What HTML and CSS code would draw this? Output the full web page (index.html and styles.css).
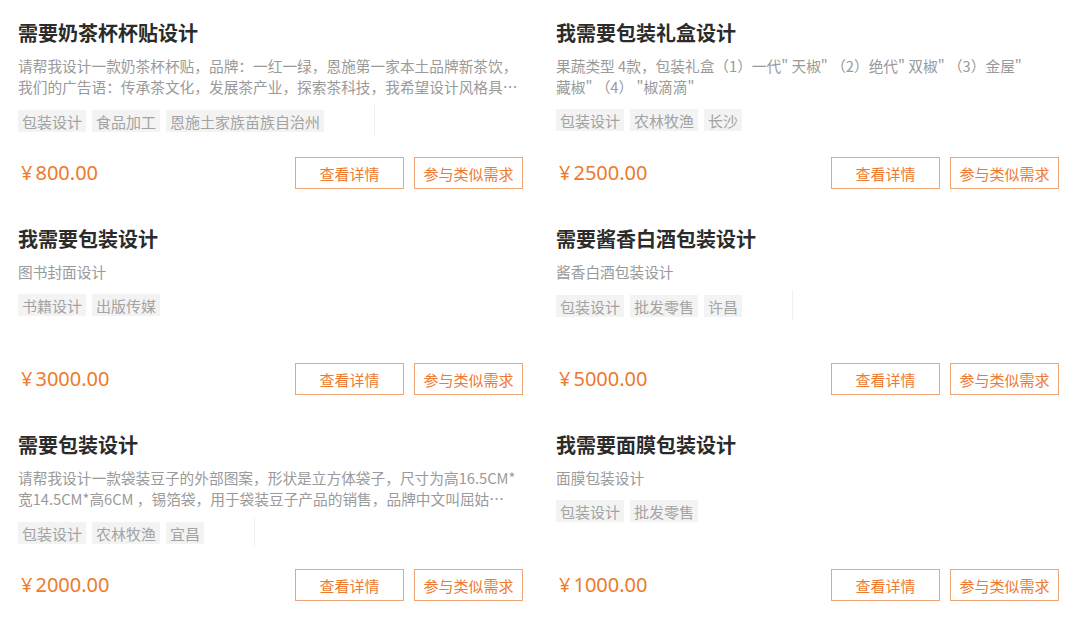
FILE: index.html
```html
<!DOCTYPE html>
<html lang="zh-CN">
<head>
<meta charset="utf-8">
<title>需求列表</title>
<link rel="stylesheet" href="styles.css">
</head>
<body>
<div class="grid">
  <div class="card">
    <div class="title">需要奶茶杯杯贴设计</div>
    <div class="desc">请帮我设计一款奶茶杯杯贴，品牌：一红一绿，恩施第一家本土品牌新茶饮，我们的广告语：传承茶文化，发展茶产业，探索茶科技，我希望设计风格具有地方特色，清新自然。</div>
    <div class="tags"><span class="tag">包装设计</span><span class="tag">食品加工</span><span class="tag">恩施土家族苗族自治州</span><span class="divider"></span></div>
    <div class="foot">
      <div class="price">¥<span class="num">800.00</span></div>
      <div class="btns"><a class="btn">查看详情</a><a class="btn">参与类似需求</a></div>
    </div>
  </div>
  <div class="card">
    <div class="title">我需要包装礼盒设计</div>
    <div class="desc">果蔬类型 4款，包装礼盒（1）一代" 天椒" （2）绝代" 双椒" （3）金屋"<br>藏椒" （4） "椒滴滴"</div>
    <div class="tags"><span class="tag">包装设计</span><span class="tag">农林牧渔</span><span class="tag">长沙</span></div>
    <div class="foot">
      <div class="price">¥<span class="num">2500.00</span></div>
      <div class="btns"><a class="btn">查看详情</a><a class="btn">参与类似需求</a></div>
    </div>
  </div>
  <div class="card">
    <div class="title">我需要包装设计</div>
    <div class="desc">图书封面设计</div>
    <div class="tags"><span class="tag">书籍设计</span><span class="tag">出版传媒</span></div>
    <div class="foot">
      <div class="price">¥<span class="num">3000.00</span></div>
      <div class="btns"><a class="btn">查看详情</a><a class="btn">参与类似需求</a></div>
    </div>
  </div>
  <div class="card">
    <div class="title">需要酱香白酒包装设计</div>
    <div class="desc">酱香白酒包装设计</div>
    <div class="tags"><span class="tag">包装设计</span><span class="tag">批发零售</span><span class="tag">许昌</span><span class="divider"></span></div>
    <div class="foot">
      <div class="price">¥<span class="num">5000.00</span></div>
      <div class="btns"><a class="btn">查看详情</a><a class="btn">参与类似需求</a></div>
    </div>
  </div>
  <div class="card">
    <div class="title">需要包装设计</div>
    <div class="desc">请帮我设计一款袋装豆子的外部图案，形状是立方体袋子，尺寸为高16.5CM*宽14.5CM*高6CM ，锡箔袋，用于袋装豆子产品的销售，品牌中文叫屈姑 QUGUFOODS，希望图案简洁大方。</div>
    <div class="tags"><span class="tag">包装设计</span><span class="tag">农林牧渔</span><span class="tag">宜昌</span><span class="divider"></span></div>
    <div class="foot">
      <div class="price">¥<span class="num">2000.00</span></div>
      <div class="btns"><a class="btn">查看详情</a><a class="btn">参与类似需求</a></div>
    </div>
  </div>
  <div class="card">
    <div class="title">我需要面膜包装设计</div>
    <div class="desc">面膜包装设计</div>
    <div class="tags"><span class="tag">包装设计</span><span class="tag">批发零售</span></div>
    <div class="foot">
      <div class="price">¥<span class="num">1000.00</span></div>
      <div class="btns"><a class="btn">查看详情</a><a class="btn">参与类似需求</a></div>
    </div>
  </div>
</div>
</body>
</html>
```
FILE: styles.css
```css
* { box-sizing: border-box; }
html, body { margin: 0; padding: 0; background: #ffffff; }
body {
  font-family: "Noto Sans CJK SC", "Noto Sans", sans-serif;
  color: #333;
}
.grid {
  display: grid;
  grid-template-columns: 505px 503px;
  grid-auto-rows: 206px;
  column-gap: 33px;
  padding-left: 18px;
}
.card {
  display: flex;
  flex-direction: column;
  padding-top: 19px;
  padding-bottom: 17px;
}
.title {
  font-size: 20px;
  line-height: 28px;
  font-weight: 700;
  color: #2b2b2b;
  white-space: nowrap;
}
.desc {
  margin-top: 8px;
  font-size: 14.7px;
  line-height: 21px;
  color: #9a9a9a;
  display: -webkit-box;
  -webkit-box-orient: vertical;
  -webkit-line-clamp: 2;
  overflow: hidden;
}
.tags {
  margin-top: 12px;
  display: flex;
  align-items: center;
  gap: 6px;
}
.tag {
  background: #f3f3f3;
  color: #a3a3a3;
  font-size: 15px;
  line-height: normal;
  padding: 1px 4px 0;
  white-space: nowrap;
}
.divider {
  width: 1px;
  height: 30px;
  margin: -4px 0 -3px 44px;
  background: #f0f0f0;
}
.foot {
  margin-top: auto;
  display: flex;
  align-items: center;
  justify-content: space-between;
}
.price {
  color: #ee7a2c;
  font-size: 20px;
  line-height: 28px;
  padding-left: 3px;
  font-family: "Noto Sans", "Noto Sans CJK SC", sans-serif;
}
.price .num { margin-left: 3px; }
.btns {
  display: flex;
  gap: 10px;
}
.btn {
  display: flex;
  align-items: center;
  justify-content: center;
  width: 109px;
  height: 32px;
  border: 1px solid #eea575;
  color: #ee7a32;
  font-size: 15px;
  cursor: pointer;
}
```
